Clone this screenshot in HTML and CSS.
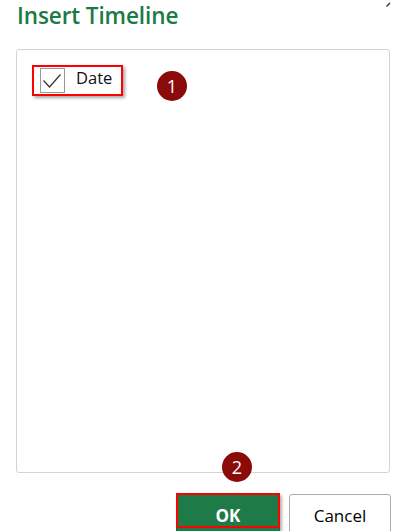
FILE: index.html
```html
<!DOCTYPE html>
<html>
<head>
<meta charset="utf-8">
<link rel="stylesheet" href="styles.css">
</head>
<body>
<div class="dialog">
  <div class="header">
    <h1 class="title">Insert Timeline</h1>
    <svg class="corner" width="5" height="5" viewBox="0 0 5 5"><path d="M0.5 4.5 L4 1" stroke="#333" stroke-width="1.4"/></svg>
  </div>
  <div class="listbox">
    <label class="item">
      <span class="check">
        <svg width="23" height="23" viewBox="0 0 23 23"><path d="M2.5 11.5 L8.5 18 L19.5 5.5" fill="none" stroke="#333" stroke-width="1.2"/></svg>
      </span>
      <span class="item-text">Date</span>
    </label>
  </div>
  <div class="buttons">
    <button class="btn btn-ok">OK</button>
    <button class="btn btn-cancel">Cancel</button>
  </div>
  <span class="badge badge-1">1</span>
  <span class="badge badge-2">2</span>
</div>
</body>
</html>
```

FILE: styles.css
```css
html, body {
  margin: 0;
  padding: 0;
  background: #ffffff;
  overflow: hidden;
}
.dialog {
  position: relative;
  width: 393px;
  height: 531px;
  font-family: "Open Sans", "Noto Sans", sans-serif;
  overflow: hidden;
}
.header {
  display: flex;
  justify-content: space-between;
  align-items: flex-start;
  height: 28px;
}
.title {
  margin: 0;
  padding-left: 17px;
  font-size: 22.5px;
  font-weight: 600;
  line-height: normal;
  color: #1b7a45;
  letter-spacing: -0.1px;
}
.corner {
  margin-top: 2px;
  margin-right: 2px;
}
.listbox {
  margin: 21px 0 0 16px;
  border: 1px solid #d4d4d4;
  border-radius: 3px;
  padding: 15px;
  box-sizing: content-box;
  width: 342px;
  height: 392px;
}
.item {
  display: inline-flex;
  align-items: center;
  height: 27px;
  border: 2px solid #ff0000;
  box-shadow: 2px 2px 3px rgba(0, 0, 0, 0.35);
  padding-left: 6px;
  box-sizing: content-box;
  width: 81px;
}
.check {
  display: flex;
  width: 23px;
  height: 23px;
  border: 1px solid #9a9a9a;
  background: #fff;
}
.item-text {
  margin-left: 11px;
  font-size: 16.5px;
  line-height: 1;
  padding-bottom: 4px;
  color: #111;
}
.buttons {
  display: flex;
  gap: 9px;
  margin-top: 20px;
  padding-left: 176px;
  align-items: flex-start;
}
.btn {
  font-family: "Open Sans", "Noto Sans", sans-serif;
  font-size: 17px;
  padding: 0;
  margin: 0;
  cursor: pointer;
}
.btn-ok {
  position: relative;
  width: 104px;
  height: 45px;
  line-height: 41px;
  background: #1e7b47;
  color: #ffffff;
  font-weight: 700;
  border: 1px solid #17663a;
  border-radius: 2px;
  box-shadow: 2px 2px 3px rgba(0, 0, 0, 0.3);
}
.btn-ok::after {
  content: "";
  position: absolute;
  left: -1px;
  top: -1px;
  width: 100px;
  height: 31px;
  border: 2px solid #ff0000;
}
.btn-cancel {
  width: 102px;
  height: 44px;
  margin-top: 1px;
  line-height: 38px;
  background: #ffffff;
  color: #000;
  border: 1px solid #ababab;
  border-radius: 3px;
}
.badge {
  position: absolute;
  width: 30px;
  height: 30px;
  border-radius: 50%;
  background: #8b0a0a;
  color: #ffffff;
  font-size: 18px;
  line-height: 30px;
  text-align: center;
}
.badge-1 {
  left: 157px;
  top: 71px;
}
.badge-2 {
  left: 222px;
  top: 452px;
}
```
